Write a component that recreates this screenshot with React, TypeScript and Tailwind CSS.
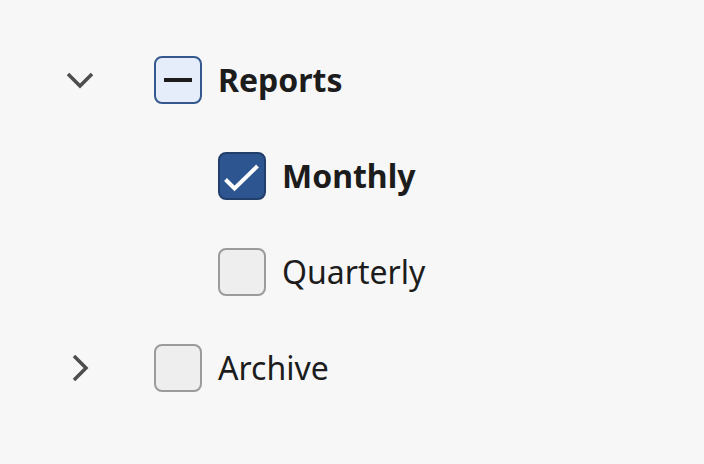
import React from "react";

type State = "checked" | "indeterminate" | "unchecked";

function Chevron({ dir }: { dir: "down" | "right" | "none" }) {
  return (
    <div className="w-12 h-12 flex items-center justify-center shrink-0 mr-[50px]">
      {dir === "down" && (
        <svg width="48" height="48" viewBox="0 0 24 24" fill="none" stroke="#4d4d4d" strokeWidth="1.75" strokeLinecap="butt" strokeLinejoin="miter">
          <path d="m6 9 6 6 6-6" />
        </svg>
      )}
      {dir === "right" && (
        <svg width="48" height="48" viewBox="0 0 24 24" fill="none" stroke="#4d4d4d" strokeWidth="1.75" strokeLinecap="butt" strokeLinejoin="miter">
          <path d="m9 6 6 6-6 6" />
        </svg>
      )}
    </div>
  );
}

function Box({ state }: { state: State }) {
  if (state === "checked") {
    return (
      <div className="w-12 h-12 rounded-lg border-2 border-[#223f6c] bg-[#2d5590] flex items-center justify-center shrink-0">
        <svg width="44" height="44" viewBox="0 0 44 44" fill="none" stroke="#ffffff" strokeWidth="4" strokeLinecap="butt" strokeLinejoin="miter">
          <path d="M5.5 25.5 L14.5 34.5 L37.5 12" />
        </svg>
      </div>
    );
  }
  if (state === "indeterminate") {
    return (
      <div className="w-12 h-12 rounded-lg border-2 border-[#35598e] bg-[#e5edfb] flex items-center justify-center shrink-0">
        <div className="w-7 h-[4px] bg-[#1b1b1b]" />
      </div>
    );
  }
  return <div className="w-12 h-12 rounded-lg border-2 border-[#9b9b9b] bg-[#eeeeee] shrink-0" />;
}

function Row({
  level,
  chevron,
  state,
  label,
}: {
  level: number;
  chevron: "down" | "right" | "none";
  state: State;
  label: string;
}) {
  return (
    <div className={`flex items-center h-12 ${level === 1 ? "pl-16" : ""}`}>
      <Chevron dir={chevron} />
      <Box state={state} />
      <span
        className={`ml-4 text-[32px] leading-none text-[#1c1c1c] ${
          state === "unchecked" ? "font-normal" : "font-bold"
        }`}
      >
        {label}
      </span>
    </div>
  );
}

export default function App() {
  return (
    <div
      className="w-[704px] h-[464px] bg-[#f7f7f7] pt-14 pl-14 flex flex-col gap-12"
      style={{ fontFamily: '"Noto Sans", "Open Sans", sans-serif' }}
    >
      <Row level={0} chevron="down" state="indeterminate" label="Reports" />
      <Row level={1} chevron="none" state="checked" label="Monthly" />
      <Row level={1} chevron="none" state="unchecked" label="Quarterly" />
      <Row level={0} chevron="right" state="unchecked" label="Archive" />
    </div>
  );
}
